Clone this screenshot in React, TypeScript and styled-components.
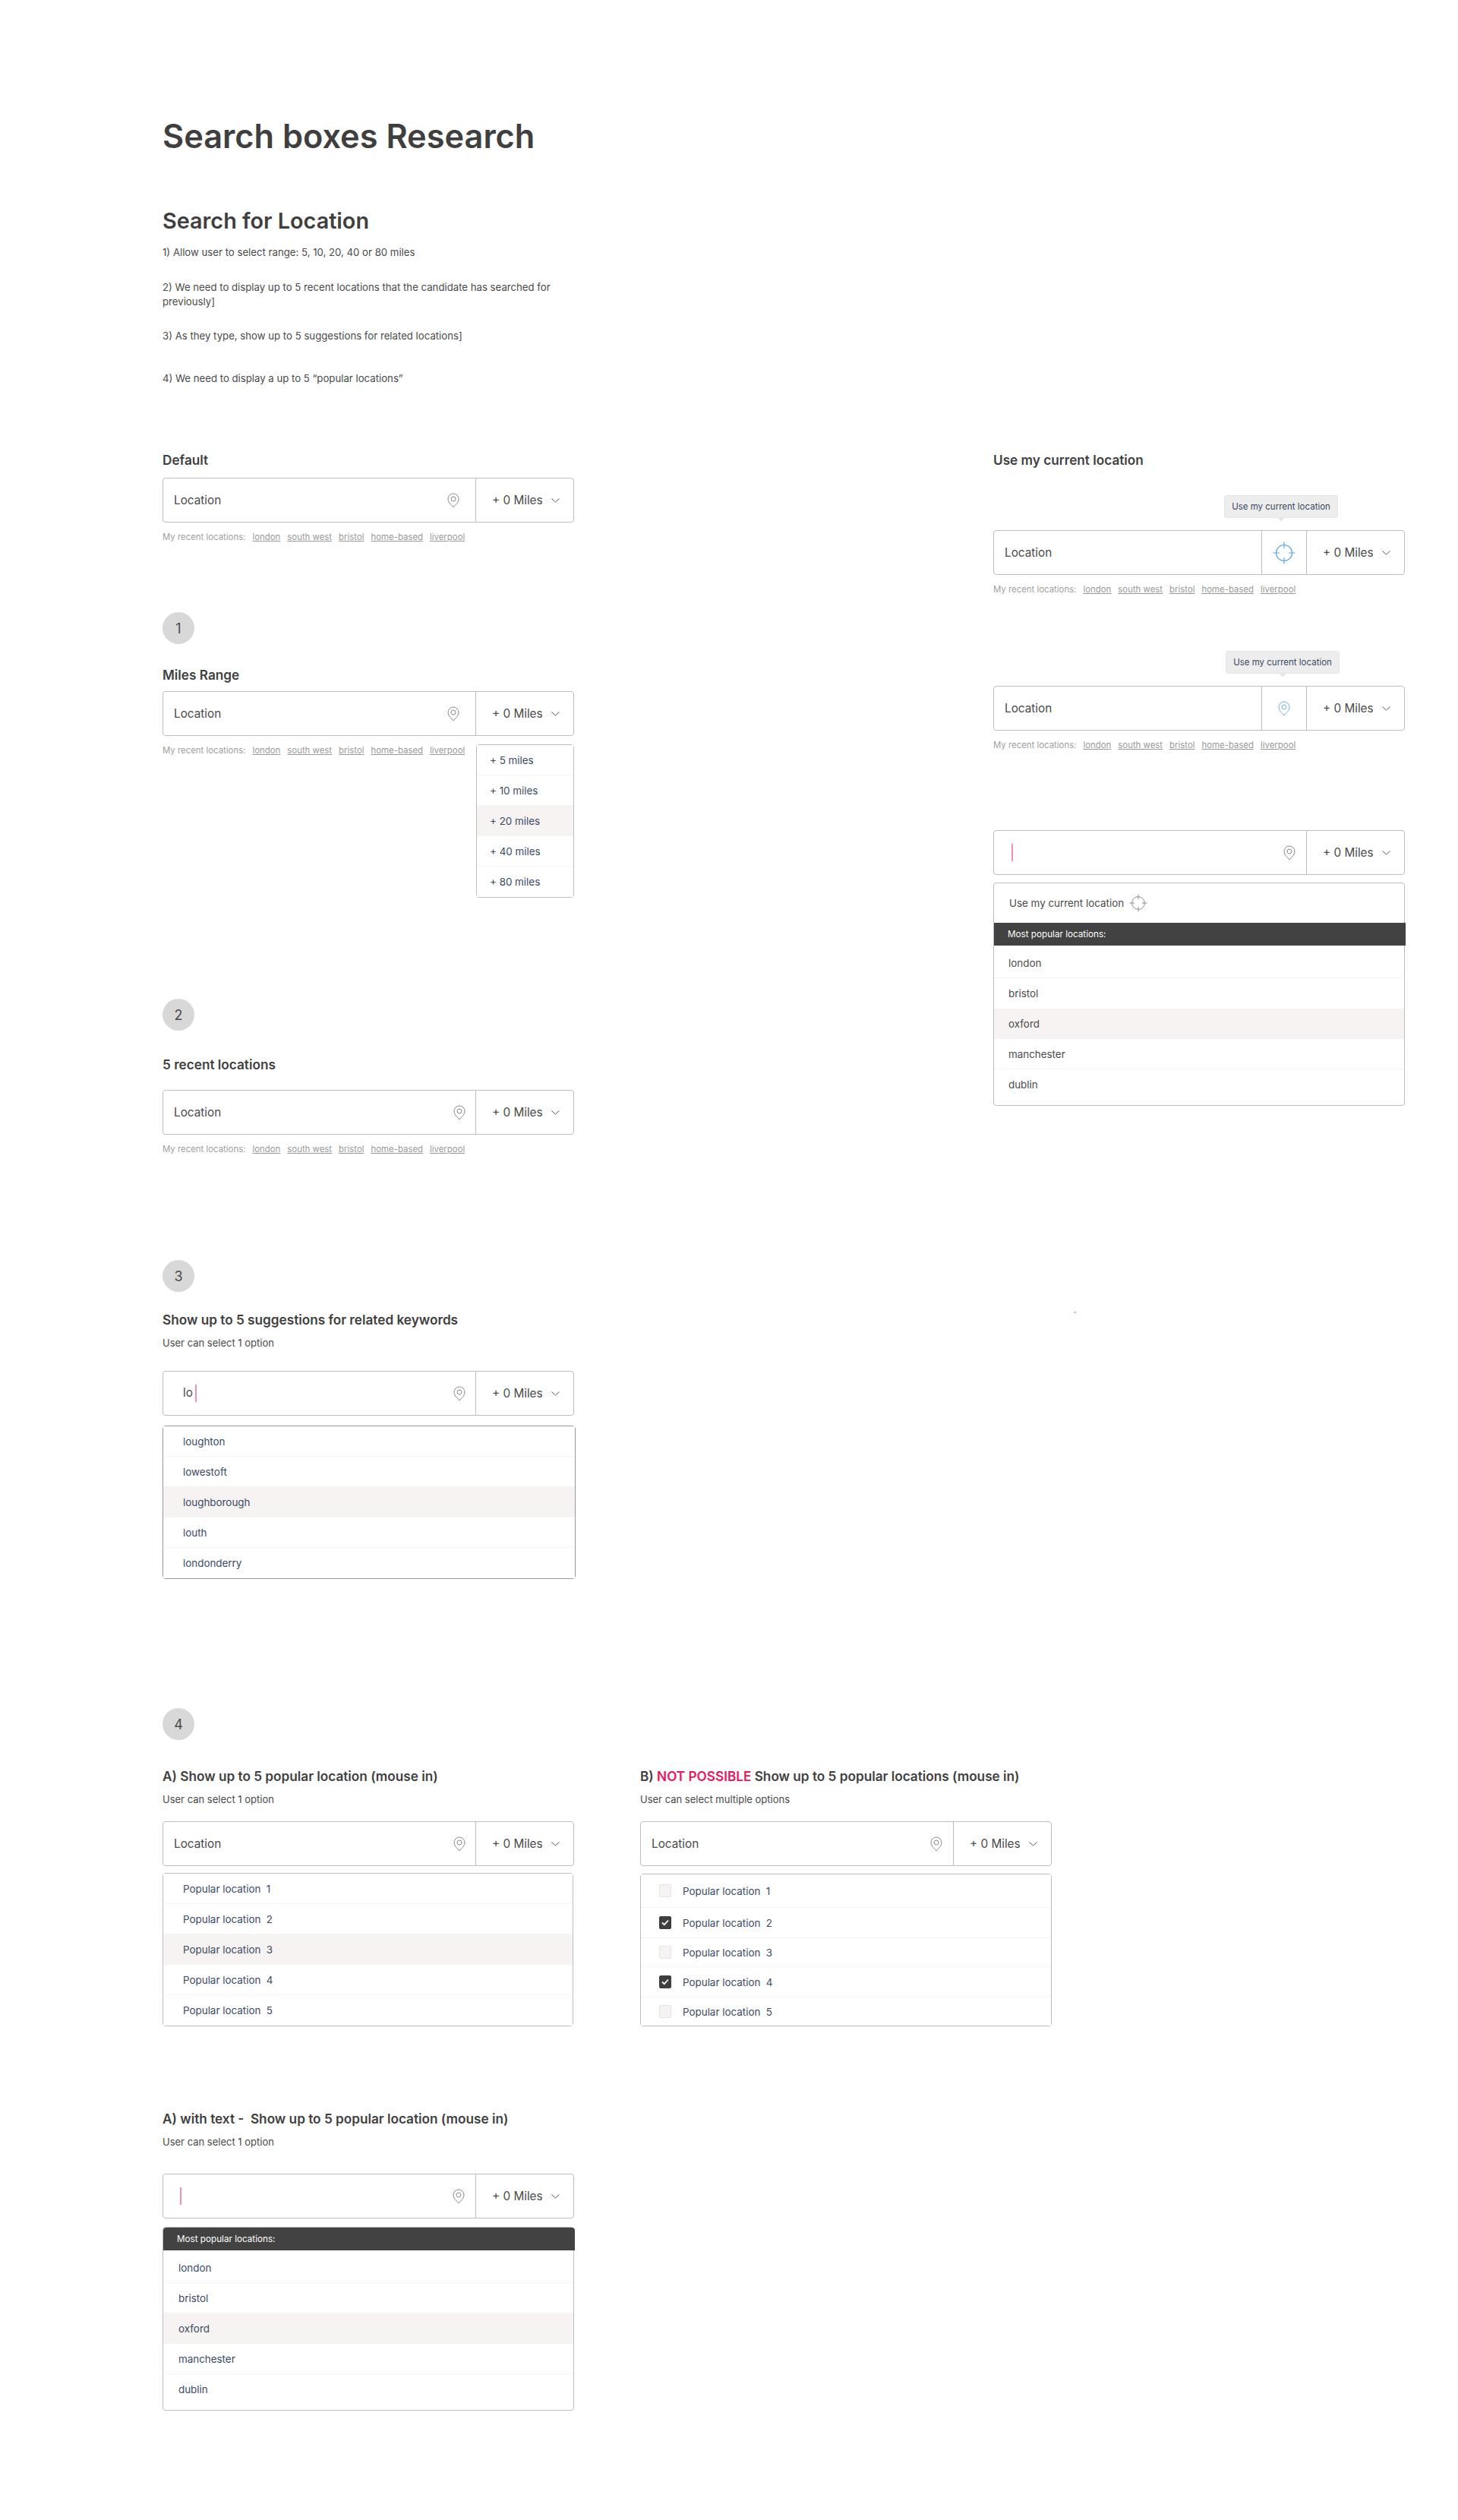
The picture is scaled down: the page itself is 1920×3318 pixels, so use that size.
import React from "react";
import styled, { createGlobalStyle } from "styled-components";

const GlobalStyle = createGlobalStyle`
  html, body {
    margin: 0;
    padding: 0;
    background: #fff;
    font-family: "Inter", "Noto Sans", sans-serif;
    color: #444;
  }
  * { box-sizing: border-box; }
`;

const Page = styled.div`
  width: 1920px;
  height: 3318px;
  padding: 151px 0 0 214px;
  position: relative;
`;

const Speck = styled.span`
  position: absolute;
  left: 1414px;
  top: 1727px;
  width: 3px;
  height: 2px;
  background: #c4c4c4;
`;

const Title = styled.h1`
  margin: 0;
  font-size: 43.3px;
  line-height: 56px;
  font-weight: 600;
  color: #3f3f3f;
`;

const Subtitle = styled.h2`
  margin: 64px 0 0;
  font-size: 28.8px;
  line-height: 40px;
  font-weight: 600;
  color: #3f3f3f;
`;

const Note = styled.p<{ $mt: number }>`
  margin: ${(p) => p.$mt}px 0 0;
  width: 540px;
  font-size: 13.2px;
  line-height: 19px;
  color: #4a4a4a;
`;

const Split = styled.div`
  display: flex;
  margin-top: 86px;
`;

const LeftColumn = styled.div`
  width: 1094px;
`;

const RightColumn = styled.div`
  width: 543px;
`;

const Heading = styled.h3<{ $mt?: number }>`
  margin: ${(p) => p.$mt ?? 0}px 0 0;
  font-size: 17.2px;
  line-height: 24px;
  font-weight: 600;
  color: #3f3f3f;
  white-space: pre;
`;

const Danger = styled.span`
  color: #e8175d;
`;

const Hint = styled.p`
  margin: 8px 0 0;
  font-size: 13px;
  line-height: 20px;
  color: #4a4a4a;
`;

const StepBadge = styled.div<{ $mt: number }>`
  width: 42px;
  height: 42px;
  margin-top: ${(p) => p.$mt}px;
  border-radius: 50%;
  background: #d8d8d8;
  display: flex;
  align-items: center;
  justify-content: center;
  font-size: 18px;
  color: #4a4a4a;
`;

const BoxWrap = styled.div<{ $mt: number; $w?: number }>`
  position: relative;
  width: ${(p) => p.$w ?? 542}px;
  margin-top: ${(p) => p.$mt}px;
`;

const Box = styled.div`
  display: flex;
  height: 59px;
  border: 1px solid #bdbdbd;
  border-radius: 4px;
  background: #fff;
`;

const InputArea = styled.div<{ $pad: number; $pinGap: number }>`
  flex: 1;
  display: flex;
  align-items: center;
  justify-content: space-between;
  padding: 0 ${(p) => p.$pinGap}px 0 ${(p) => p.$pad}px;
  font-size: 15.3px;
  color: #4a4a4a;
`;

const Caret = styled.span<{ $ml?: number }>`
  display: inline-block;
  width: 2px;
  height: 23px;
  margin-left: ${(p) => p.$ml ?? 0}px;
  vertical-align: middle;
  background: #f48fb1;
`;

const IconCell = styled.div`
  width: 59px;
  border-left: 1px solid #bdbdbd;
  display: flex;
  align-items: center;
  justify-content: center;
`;

const MilesCell = styled.div`
  width: 129px;
  border-left: 1px solid #bdbdbd;
  display: flex;
  align-items: center;
  justify-content: space-between;
  padding: 0 18px 0 21px;
  font-size: 15.3px;
  color: #4a4a4a;
  white-space: nowrap;
`;

const Recent = styled.div<{ $mt?: number }>`
  display: flex;
  gap: 9px;
  margin-top: ${(p) => p.$mt ?? 11}px;
  font-size: 11.4px;
  line-height: 16px;
  color: #a0a0a0;
  white-space: nowrap;
`;

const RecentLink = styled.span`
  color: #999;
  text-decoration: underline;
  &:first-of-type {
    margin-left: -11px;
  }
`;

const Menu = styled.div<{ $mt?: number; $w?: number; $borderColor?: string }>`
  width: ${(p) => p.$w ?? 542}px;
  margin-top: ${(p) => p.$mt ?? 0}px;
  border: 1px solid ${(p) => p.$borderColor ?? "#bdbdbd"};
  border-radius: 4px;
  background: #fff;
`;

const FloatingMenu = styled(Menu)`
  position: absolute;
  top: 70px;
  right: 0;
  width: 129px;
`;

const MenuRow = styled.div<{ $active?: boolean; $pad: number; $h?: number; $dark?: boolean; $noLine?: boolean }>`
  display: flex;
  align-items: center;
  gap: 8px;
  height: ${(p) => p.$h ?? 40}px;
  padding-left: ${(p) => p.$pad}px;
  border-bottom: ${(p) => (p.$noLine ? "none" : "1px solid #f3f3f3")};
  background: ${(p) => (p.$active ? "#f6f3f2" : "#fff")};
  font-size: 13.4px;
  color: ${(p) => (p.$dark ? "#4a4a4a" : "#3a4a63")};
  white-space: pre;
  &:last-child {
    border-bottom: none;
  }
`;

const CurrentRow = styled.div`
  display: flex;
  align-items: center;
  gap: 7px;
  height: 52px;
  padding-left: 20px;
  font-size: 13.4px;
  color: #4a4a4a;
`;

const PopularHeader = styled.div<{ $pad: number; $rounded?: boolean }>`
  display: flex;
  align-items: center;
  height: 30px;
  margin: 0 -2px 3px 0;
  padding-left: ${(p) => p.$pad}px;
  background: #424242;
  border-radius: ${(p) => (p.$rounded ? "4px 4px 0 0" : "0")};
  font-size: 11.7px;
  color: #fff;
`;

const MenuFooter = styled.div`
  height: 7px;
`;

const Tooltip = styled.div<{ $left: number }>`
  position: absolute;
  top: -46px;
  left: ${(p) => p.$left}px;
  width: 150px;
  height: 30px;
  display: flex;
  align-items: center;
  justify-content: center;
  border: 1px solid #e4e4e4;
  border-radius: 3px;
  background: #ededed;
  font-size: 11.5px;
  color: #3a4a63;
  white-space: nowrap;
  &::after {
    content: "";
    position: absolute;
    bottom: -6px;
    left: 50%;
    margin-left: -5px;
    border-left: 5px solid transparent;
    border-right: 5px solid transparent;
    border-top: 6px solid #e6e6e6;
  }
`;

const Check = styled.span<{ $on?: boolean }>`
  width: 16px;
  height: 17px;
  display: flex;
  align-items: center;
  justify-content: center;
  border: 1px solid ${(p) => (p.$on ? "#3f3f3f" : "#e6e3e2")};
  border-radius: 2px;
  background: ${(p) => (p.$on ? "#3f3f3f" : "#f6f3f2")};
  margin-right: 7px;
`;

const Row4 = styled.div`
  display: flex;
`;

const Col4 = styled.div<{ $w: number }>`
  width: ${(p) => p.$w}px;
`;

const Pin = ({ color = "#8a8a8a" }: { color?: string }) => (
  <svg width="16" height="20" viewBox="0 0 16 20" fill="none" stroke={color} strokeWidth="1">
    <path d="M8 19 C6.4 16.6 1 13 1 8 A7 7 0 0 1 15 8 C15 13 9.6 16.6 8 19 Z" />
    <circle cx="8" cy="8" r="3" />
  </svg>
);

const Chevron = () => (
  <svg width="11" height="6" viewBox="0 0 11 6" fill="none" stroke="#555" strokeWidth="1">
    <path d="M0.5 0.5 L5.5 5 L10.5 0.5" />
  </svg>
);

const Target = ({ color, size }: { color: string; size: number }) => (
  <svg width={size} height={size} viewBox="0 0 30 30" fill="none" stroke={color} strokeWidth="1.2">
    <circle cx="15" cy="15" r="10.5" />
    <path d="M15 0.5 V9 M15 21 V29.5 M0.5 15 H9 M21 15 H29.5" />
  </svg>
);

const Tick = () => (
  <svg width="10" height="9" viewBox="0 0 10 9" fill="none" stroke="#fff" strokeWidth="1.8">
    <path d="M1 4.5 L3.8 7.2 L9 1.5" />
  </svg>
);

const recentPlaces = ["london", "south west", "bristol", "home-based", "liverpool"];
const popularPlaces = ["london", "bristol", "oxford", "manchester", "dublin"];
const suggestions = ["loughton", "lowestoft", "loughborough", "louth", "londonderry"];
const miles = ["+ 5 miles", "+ 10 miles", "+ 20 miles", "+ 40 miles", "+ 80 miles"];
const checkRows = [
  { n: 1, on: false, h: 44 },
  { n: 2, on: true, h: 40 },
  { n: 3, on: false, h: 38 },
  { n: 4, on: true, h: 40 },
  { n: 5, on: false, h: 37 },
];

const RecentLocations = ({ mt }: { mt?: number }) => (
  <Recent $mt={mt}>
    <span>My recent locations:</span>
    {recentPlaces.map((place) => (
      <RecentLink key={place}>{place}</RecentLink>
    ))}
  </Recent>
);

const MilesSelect = () => (
  <MilesCell>
    + 0 Miles
    <Chevron />
  </MilesCell>
);

const LocationBox = ({ pinGap = 22 }: { pinGap?: number }) => (
  <Box>
    <InputArea $pad={14} $pinGap={pinGap}>
      Location
      <Pin />
    </InputArea>
    <MilesSelect />
  </Box>
);

const CaretBox = ({ pad }: { pad: number }) => (
  <Box>
    <InputArea $pad={pad} $pinGap={14}>
      <span>
        <Caret />
      </span>
      <Pin />
    </InputArea>
    <MilesSelect />
  </Box>
);

export default function App() {
  return (
    <Page>
      <GlobalStyle />
      <Speck />
      <Title>Search boxes Research</Title>
      <Subtitle>Search for Location</Subtitle>
      <Note $mt={12}>1) Allow user to select range: 5, 10, 20, 40 or 80 miles</Note>
      <Note $mt={27}>
        2) We need to display up to 5 recent locations that the candidate has searched for
        previously]
      </Note>
      <Note $mt={26}>3) As they type, show up to 5 suggestions for related locations]</Note>
      <Note $mt={37}>4) We need to display a up to 5 “popular locations”</Note>

      <Split>
        <LeftColumn>
          <Heading>Default</Heading>
          <BoxWrap $mt={11}>
            <LocationBox pinGap={21} />
          </BoxWrap>
          <RecentLocations />

          <StepBadge $mt={91}>1</StepBadge>
          <Heading $mt={29}>Miles Range</Heading>
          <BoxWrap $mt={9}>
            <LocationBox pinGap={21} />
            <FloatingMenu>
              {miles.map((label, i) => (
                <MenuRow key={label} $pad={17} $active={i === 2}>
                  {label}
                </MenuRow>
              ))}
            </FloatingMenu>
          </BoxWrap>
          <RecentLocations />

          <StepBadge $mt={319}>2</StepBadge>
          <Heading $mt={33}>5 recent locations</Heading>
          <BoxWrap $mt={21}>
            <LocationBox pinGap={13} />
          </BoxWrap>
          <RecentLocations />
        </LeftColumn>

        <RightColumn>
          <Heading>Use my current location</Heading>
          <BoxWrap $mt={80} $w={542}>
            <Tooltip $left={304}>Use my current location</Tooltip>
            <Box>
              <InputArea $pad={14} $pinGap={0}>
                Location
              </InputArea>
              <IconCell>
                <Target color="#5aa5e0" size={30} />
              </IconCell>
              <MilesSelect />
            </Box>
          </BoxWrap>
          <RecentLocations />

          <BoxWrap $mt={119} $w={542}>
            <Tooltip $left={306}>Use my current location</Tooltip>
            <Box>
              <InputArea $pad={14} $pinGap={0}>
                Location
              </InputArea>
              <IconCell>
                <Pin color="#6fb0e4" />
              </IconCell>
              <MilesSelect />
            </Box>
          </BoxWrap>
          <RecentLocations />

          <BoxWrap $mt={104} $w={542}>
            <CaretBox pad={23} />
          </BoxWrap>
          <Menu $mt={10}>
            <CurrentRow>
              Use my current location
              <Target color="#8a8a8a" size={24} />
            </CurrentRow>
            <PopularHeader $pad={18}>Most popular locations:</PopularHeader>
            {popularPlaces.map((place, i) => (
              <MenuRow key={place} $pad={19} $active={i === 2} $dark $noLine={i >= 1 && i !== 3}>
                {place}
              </MenuRow>
            ))}
            <MenuFooter />
          </Menu>
        </RightColumn>
      </Split>

      <StepBadge $mt={138}>3</StepBadge>
      <Heading $mt={25}>Show up to 5 suggestions for related keywords</Heading>
      <Hint>User can select 1 option</Hint>
      <BoxWrap $mt={27}>
        <Box>
          <InputArea $pad={26} $pinGap={13}>
            <span>
              lo
              <Caret $ml={3} />
            </span>
            <Pin />
          </InputArea>
          <MilesSelect />
        </Box>
      </BoxWrap>
      <Menu $mt={13} $w={544} $borderColor="#999">
        {suggestions.map((place, i) => (
          <MenuRow key={place} $pad={26} $active={i === 2}>
            {place}
          </MenuRow>
        ))}
      </Menu>

      <StepBadge $mt={170}>4</StepBadge>
      <Row4>
        <Col4 $w={629}>
          <Heading $mt={36}>A) Show up to 5 popular location (mouse in)</Heading>
          <Hint>User can select 1 option</Hint>
          <BoxWrap $mt={19}>
            <LocationBox pinGap={13} />
          </BoxWrap>
          <Menu $mt={9} $w={541}>
            {[1, 2, 3, 4, 5].map((n) => (
              <MenuRow key={n} $pad={26} $active={n === 3}>
                {`Popular location  ${n}`}
              </MenuRow>
            ))}
          </Menu>
        </Col4>
        <Col4 $w={543}>
          <Heading $mt={36}>
            B) <Danger>NOT POSSIBLE</Danger> Show up to 5 popular locations (mouse in)
          </Heading>
          <Hint>User can select multiple options</Hint>
          <BoxWrap $mt={19}>
            <LocationBox pinGap={14} />
          </BoxWrap>
          <Menu $mt={10}>
            {checkRows.map((row) => (
              <MenuRow key={row.n} $pad={24} $h={row.h}>
                <Check $on={row.on}>{row.on && <Tick />}</Check>
                {`Popular location  ${row.n}`}
              </MenuRow>
            ))}
          </Menu>
        </Col4>
      </Row4>

      <Heading $mt={110}>A) with text -  Show up to 5 popular location (mouse in)</Heading>
      <Hint>User can select 1 option</Hint>
      <BoxWrap $mt={32}>
        <CaretBox pad={22} />
      </BoxWrap>
      <Menu $mt={11}>
        <PopularHeader $pad={18} $rounded>
          Most popular locations:
        </PopularHeader>
        {popularPlaces.map((place, i) => (
          <MenuRow key={place} $pad={20} $active={i === 2} $noLine={i === 4}>
            {place}
          </MenuRow>
        ))}
        <MenuFooter />
      </Menu>
    </Page>
  );
}
